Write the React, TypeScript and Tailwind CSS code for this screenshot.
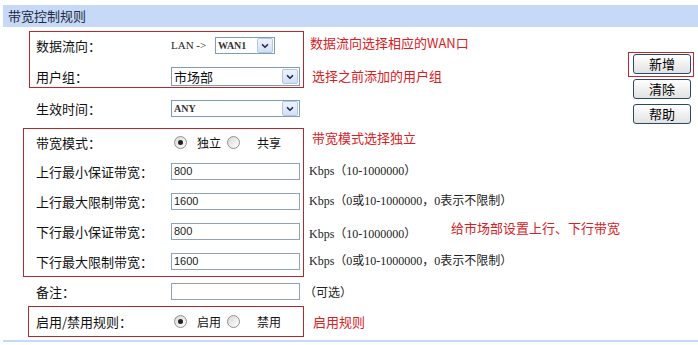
import React from 'react';
import { ChevronDown } from 'lucide-react';

const Label = ({ children }: { children: React.ReactNode }) => (
  <div className="w-[135px] shrink-0 text-[13px] leading-none text-[#111]">{children}</div>
);

const Select = ({ value, className, valueClass }: { value: string; className: string; valueClass: string }) => (
  <div className={`flex items-center border border-[#7f9db9] bg-white ${className}`}>
    <span className={`flex-1 pl-[2px] ${valueClass}`}>{value}</span>
    <span className="mr-[1px] flex h-[15px] w-[16px] items-center justify-center rounded-[2px] border border-[#b4c6e0] bg-gradient-to-b from-[#eef3fb] to-[#d3dff3]">
      <ChevronDown className="h-[10px] w-[10px] text-[#1b2f55]" strokeWidth={4} />
    </span>
  </div>
);

const Input = ({ value }: { value?: string }) => (
  <div className="flex h-[17px] w-[129px] items-center border border-[#8ea3b8] bg-white pl-[2px] font-['Liberation_Sans',sans-serif] text-[11px] text-[#222]">
    {value}
  </div>
);

const Radio = ({ checked }: { checked?: boolean }) => (
  <span className="flex h-[13px] w-[13px] shrink-0 items-center justify-center rounded-full border border-[#8e8f8f] bg-gradient-to-br from-[#d8d8d8] to-white">
    {checked && <span className="h-[5px] w-[5px] rounded-full bg-[#222]" />}
  </span>
);

const RadioPair = ({ a, b }: { a: string; b: string }) => (
  <div className="flex items-center pl-[3px] text-[12px] text-[#111]">
    <Radio checked />
    <span className="ml-[10px]">{a}</span>
    <span className="ml-[6px]">
      <Radio />
    </span>
    <span className="ml-[17px]">{b}</span>
  </div>
);

const Kbps = ({ children }: { children: React.ReactNode }) => (
  <span className="font-['Liberation_Serif','Noto_Sans_CJK_SC',serif] text-[12px] text-[#222]">{children}</span>
);

const Btn = ({ children }: { children: React.ReactNode }) => (
  <button className="flex h-[20px] w-[58px] items-center justify-center rounded-[3px] border border-[#2a4868] bg-gradient-to-b from-white to-[#e2e2e2] text-[13px] text-black">
    {children}
  </button>
);

const note = 'text-[13px] leading-[18px] text-[#d8211f]';

export default function App() {
  return (
    <div className="h-[345px] w-[698px] overflow-hidden bg-white pl-[3px] pt-[5px] font-['Noto_Sans_CJK_SC',sans-serif]">
      {/* Title bar */}
      <div className="flex h-[22px] items-center bg-[#c6d9f6] pl-[5px] text-[13px] text-[#1e2a44]">带宽控制规则</div>

      <div className="flex">
        <div className="w-[625px]">
          {/* Data direction + user group */}
          <div className="mt-[4px] flex">
            <div className="ml-[26px] w-[275px] border border-[#b22a2e] pb-[1px] pl-[6px] pt-[5px]">
              <div className="flex h-[17px] items-center">
                <Label>数据流向：</Label>
                <span className="w-[44px] font-['Liberation_Serif',serif] text-[11px] text-[#222]">LAN -&gt;</span>
                <Select
                  value="WAN1"
                  className="h-[17px] w-[60px]"
                  valueClass="font-['Liberation_Serif',serif] text-[10px] font-bold text-[#333]"
                />
              </div>
              <div className="mt-[13px] flex h-[19px] items-center">
                <Label>用户组：</Label>
                <Select value="市场部" className="h-[19px] w-[129px]" valueClass="text-[13px] leading-none text-[#111]" />
              </div>
            </div>
            <div className={`pl-[6px] ${note}`}>
              <div className="flex h-[24px] items-center">数据流向选择相应的WAN口</div>
              <div className="ml-[2px] mt-[12px] flex h-[18px] items-center">选择之前添加的用户组</div>
            </div>
          </div>

          {/* Effective time */}
          <div className="mt-[12px] flex h-[17px] items-center pl-[33px]">
            <Label>生效时间：</Label>
            <Select
              value="ANY"
              className="h-[17px] w-[129px]"
              valueClass="font-['Liberation_Serif',serif] text-[10px] font-bold text-[#333]"
            />
          </div>

          {/* Bandwidth */}
          <div className="mt-[11px] flex">
            <div className="ml-[20px] w-[281px] border border-[#b22a2e] pl-[12px]">
              <div className="flex h-[27px] items-center">
                <Label>带宽模式：</Label>
                <RadioPair a="独立" b="共享" />
              </div>
              <div className="flex h-[30px] items-center">
                <Label>上行最小保证带宽：</Label>
                <Input value="800" />
              </div>
              <div className="flex h-[30px] items-center">
                <Label>上行最大限制带宽：</Label>
                <Input value="1600" />
              </div>
              <div className="flex h-[30px] items-center">
                <Label>下行最小保证带宽：</Label>
                <Input value="800" />
              </div>
              <div className="flex h-[30px] items-center">
                <Label>下行最大限制带宽：</Label>
                <Input value="1600" />
              </div>
            </div>
            <div className="pl-[5px] pt-[1px]">
              <div className="flex h-[27px] items-start">
                <span className={`ml-[3px] ${note}`}>带宽模式选择独立</span>
              </div>
              <div className="flex h-[30px] items-center">
                <Kbps>Kbps（10-1000000）</Kbps>
              </div>
              <div className="flex h-[30px] items-center">
                <Kbps>Kbps（0或10-1000000，0表示不限制）</Kbps>
              </div>
              <div className="flex h-[30px] items-center">
                <span className="w-[142px]">
                  <Kbps>Kbps（10-1000000）</Kbps>
                </span>
                <span className={`mb-[7px] ${note}`}>给市场部设置上行、下行带宽</span>
              </div>
              <div className="flex h-[30px] items-center">
                <Kbps>Kbps（0或10-1000000，0表示不限制）</Kbps>
              </div>
            </div>
          </div>

          {/* Remark */}
          <div className="mt-[6px] flex h-[17px] items-center pl-[33px]">
            <Label>备注：</Label>
            <Input />
            <span className="ml-[4px] text-[12px] text-[#222]">（可选）</span>
          </div>

          {/* Enable */}
          <div className="mt-[6px] flex">
            <div className="ml-[25px] w-[276px] border border-[#b22a2e] pl-[7px]">
              <div className="flex h-[29px] items-center">
                <Label>启用/禁用规则：</Label>
                <RadioPair a="启用" b="禁用" />
              </div>
            </div>
            <div className="flex h-[31px] items-center pl-[9px]">
              <span className={note}>启用规则</span>
            </div>
          </div>
        </div>

        {/* Buttons */}
        <div className="w-[70px] pt-[25px]">
          <div className="w-[66px] border border-[#c0282e] pb-[2px] pl-[4px] pt-[1px]">
            <Btn>新增</Btn>
          </div>
          <div className="ml-[5px] mt-[2px]">
            <Btn>清除</Btn>
          </div>
          <div className="ml-[5px] mt-[5px]">
            <Btn>帮助</Btn>
          </div>
        </div>
      </div>

      <div className="mt-[3px] h-[2px] bg-[#c6d9f6]" />
    </div>
  );
}
